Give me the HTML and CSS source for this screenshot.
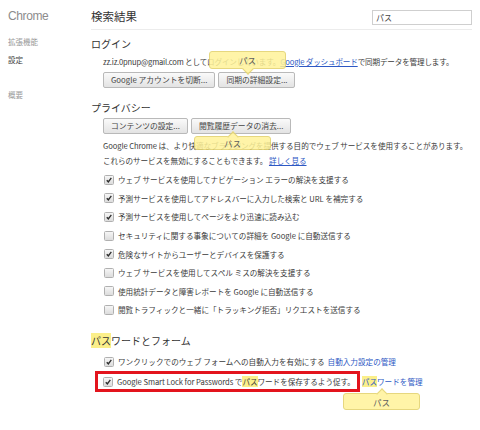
FILE: index.html
```html
<!DOCTYPE html>
<html lang="ja">
<head>
<meta charset="utf-8">
<title>設定 - 検索結果</title>
<link rel="stylesheet" href="styles.css">
</head>
<body>
<div class="page">
  <nav class="sidebar">
    <div class="brand">Chrome</div>
    <div class="nav-item nav-ext">拡張機能</div>
    <div class="nav-item nav-active">設定</div>
    <div class="nav-item nav-about">概要</div>
  </nav>
  <main class="main">
    <header class="header">
      <h1 class="title">検索結果</h1>
      <div class="search">パス</div>
    </header>

    <section class="sec sec-login">
      <h2 class="h2">ログイン</h2>
      <p class="email">zz.iz.0pnup@gmail.com としてログインしています。<a class="link u">Google ダッシュボード</a>で同期データを管理します。</p>
      <div class="btn-row btn-row-login">
        <span class="btn">Google アカウントを切断...</span>
        <span class="btn">同期の詳細設定...</span>
      </div>
    </section>

    <section class="sec sec-privacy">
      <h2 class="h2">プライバシー</h2>
      <div class="btn-row btn-row-priv">
        <span class="btn">コンテンツの設定...</span>
        <span class="btn">閲覧履歴データの消去...</span>
      </div>
      <p class="desc">Google Chrome は、より快適なブラウジングを提供する目的でウェブ サービスを使用することがあります。<br>これらのサービスを無効にすることもできます。 <a class="link u">詳しく見る</a></p>
      <div class="checks">
        <div class="check"><span class="cb on"><svg viewBox="0 0 10 10"><path d="M2.2 5.2 L4.2 7.3 L7.9 2.4"/></svg></span>ウェブ サービスを使用してナビゲーション エラーの解決を支援する</div>
        <div class="check"><span class="cb on"><svg viewBox="0 0 10 10"><path d="M2.2 5.2 L4.2 7.3 L7.9 2.4"/></svg></span>予測サービスを使用してアドレスバーに入力した検索と URL を補完する</div>
        <div class="check"><span class="cb on"><svg viewBox="0 0 10 10"><path d="M2.2 5.2 L4.2 7.3 L7.9 2.4"/></svg></span>予測サービスを使用してページをより迅速に読み込む</div>
        <div class="check"><span class="cb"></span>セキュリティに関する事象についての詳細を Google に自動送信する</div>
        <div class="check"><span class="cb on"><svg viewBox="0 0 10 10"><path d="M2.2 5.2 L4.2 7.3 L7.9 2.4"/></svg></span>危険なサイトからユーザーとデバイスを保護する</div>
        <div class="check"><span class="cb"></span>ウェブ サービスを使用してスペル ミスの解決を支援する</div>
        <div class="check"><span class="cb"></span>使用統計データと障害レポートを Google に自動送信する</div>
        <div class="check"><span class="cb"></span>閲覧トラフィックと一緒に「トラッキング拒否」リクエストを送信する</div>
      </div>
    </section>

    <section class="sec sec-pw">
      <h2 class="h2"><span class="hl">パス</span>ワードとフォーム</h2>
      <div class="checks checks-pw">
        <div class="check"><span class="cb on"><svg viewBox="0 0 10 10"><path d="M2.2 5.2 L4.2 7.3 L7.9 2.4"/></svg></span>ワンクリックでのウェブ フォームへの自動入力を有効にする<a class="link gap">自動入力設定の管理</a></div>
        <div class="red-row">
          <div class="redbox"><span class="cb on"><svg viewBox="0 0 10 10"><path d="M2.2 5.2 L4.2 7.3 L7.9 2.4"/></svg></span>Google Smart Lock for Passwords で<span class="hl">パス</span>ワードを保存するよう促す。</div>
          <a class="link pw-link"><span class="hl">パス</span>ワードを管理</a>
        </div>
      </div>
    </section>

    <div class="tip tip-down tip1">パス</div>
    <div class="tip tip-up tip2">パス</div>
    <div class="tip tip-up tip3">パス</div>
  </main>
</div>
</body>
</html>
```

FILE: styles.css
```css
* {
  box-sizing: border-box;
  margin: 0;
  padding: 0;
}

html,
body {
  background: #ffffff;
}

body {
  width: 480px;
  height: 430px;
  overflow: hidden;
  font-family: "Noto Sans CJK JP", "Liberation Sans", sans-serif;
  font-size: 7.6px;
  color: #3a3a3a;
}

.page {
  display: flex;
  height: 430px;
}

/* sidebar */
.sidebar {
  width: 91px;
  flex: none;
  padding: 7px 0 0 8px;
}

.brand {
  font-family: "Liberation Sans", sans-serif;
  font-size: 12px;
  line-height: 18px;
  letter-spacing: -0.4px;
  color: #8c8c8c;
}

.nav-item {
  font-size: 7.5px;
  line-height: 12px;
}

.nav-ext {
  margin-top: 11px;
  color: #9a9a9a;
}

.nav-active {
  margin-top: 6px;
  color: #444444;
}

.nav-about {
  margin-top: 23px;
  color: #9a9a9a;
}

/* main */
.main {
  width: 381px;
  flex: none;
  position: relative;
}

.header {
  display: flex;
  justify-content: space-between;
  height: 30px;
  border-bottom: 1px solid #ececec;
}

.title {
  font-weight: normal;
  font-size: 11.5px;
  line-height: 16px;
  margin-top: 8px;
  color: #333333;
}

.search {
  width: 100px;
  height: 15px;
  margin-top: 10px;
  border: 1px solid #cfcfcf;
  font-size: 8px;
  line-height: 13px;
  padding-left: 3px;
  color: #444444;
}

.h2 {
  font-weight: normal;
  font-size: 10px;
  line-height: 14px;
  color: #333333;
}

.sec-login .h2 {
  margin-top: 7px;
}

.email {
  margin-top: 5px;
  padding-left: 12px;
  line-height: 12px;
  letter-spacing: -0.18px;
  white-space: nowrap;
}

.btn-row {
  display: flex;
  gap: 3px;
  padding-left: 12px;
}

.btn-row-login {
  margin-top: 4px;
}

.btn {
  height: 16px;
  padding: 0 7px;
  border: 1px solid #b9b9b9;
  border-radius: 2px;
  background: linear-gradient(#fafafa, #e3e3e3);
  font-size: 7.8px;
  line-height: 14px;
  color: #444444;
  white-space: nowrap;
}

.sec-privacy .h2 {
  margin-top: 13px;
}

.btn-row-priv {
  margin-top: 3px;
}

.desc {
  margin-top: 3.5px;
  padding-left: 12px;
  line-height: 15px;
  letter-spacing: -0.08px;
  white-space: nowrap;
}

.checks {
  margin-top: 3px;
}

.check {
  display: flex;
  align-items: center;
  height: 18.6px;
  padding-left: 13px;
  white-space: nowrap;
}

.cb {
  width: 10px;
  height: 10px;
  flex: none;
  margin-right: 4px;
  border: 1px solid #b0b0b0;
  border-radius: 1.5px;
  background: linear-gradient(#f6f6f6, #dcdcdc);
  display: flex;
}

.cb svg {
  width: 8px;
  height: 8px;
}

.cb svg path {
  fill: none;
  stroke: #2e2e2e;
  stroke-width: 1.7;
}

.sec-pw .h2 {
  margin-top: 14.5px;
}

.checks-pw {
  margin-top: 4.7px;
}

.red-row {
  display: flex;
  align-items: center;
  height: 21px;
  white-space: nowrap;
}

.redbox {
  display: flex;
  align-items: center;
  height: 21px;
  margin-left: 4px;
  padding: 0 2px 0 5px;
  border: 3px solid #e3141d;
  letter-spacing: -0.05px;
}

.link {
  color: #2d58c4;
}

.link.u {
  text-decoration: underline;
}

.gap {
  margin-left: 3px;
}

.pw-link {
  margin-left: 2px;
}

.hl {
  background: #fbef8a;
}

/* tooltips */
.tip {
  position: absolute;
  display: flex;
  align-items: center;
  justify-content: center;
  background: #fff399;
  border: 1px solid #e2d169;
  border-radius: 3px;
  opacity: 0.85;
  font-size: 8.5px;
  color: #444444;
}

.tip::after {
  content: "";
  position: absolute;
  left: 50%;
  width: 7px;
  height: 7px;
  margin-left: -4px;
  background: #fff399;
  border-right: 1px solid #e2d169;
  border-bottom: 1px solid #e2d169;
}

.tip-down::after {
  bottom: -4.5px;
  transform: rotate(45deg);
}

.tip-up::after {
  top: -4.5px;
  transform: rotate(225deg);
}

.tip1 {
  left: 118px;
  top: 51px;
  width: 77px;
  height: 18px;
}

.tip2 {
  left: 103px;
  top: 136px;
  width: 77px;
  height: 14px;
}

.tip3 {
  left: 252px;
  top: 393px;
  width: 77px;
  height: 17px;
}
```
